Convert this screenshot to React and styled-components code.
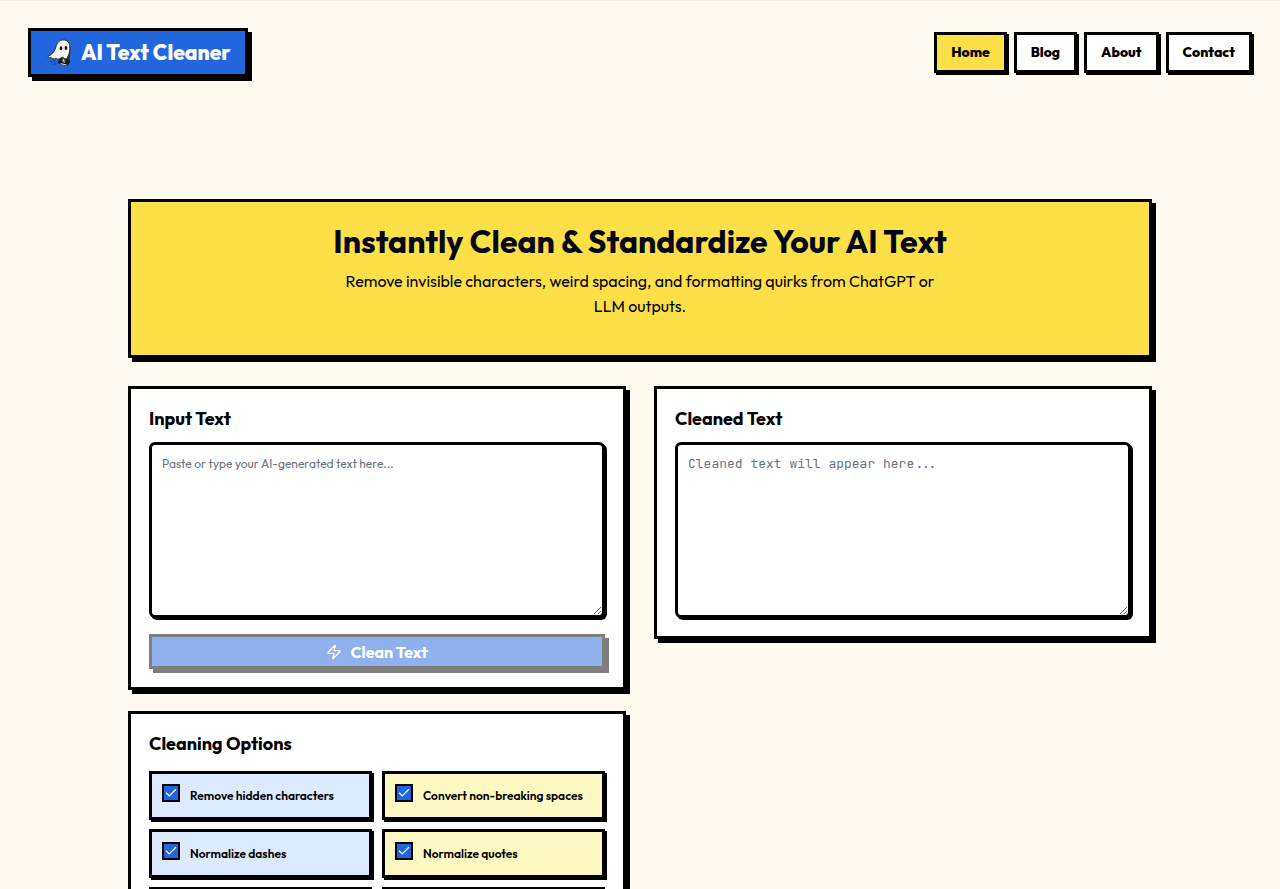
import React from 'react';
import styled, { createGlobalStyle } from 'styled-components';
import { Check, Zap } from 'lucide-react';

const GlobalStyle = createGlobalStyle`
  *, *::before, *::after { box-sizing: border-box; }
  body {
    margin: 0;
    background: #fffaf0;
    color: #000;
    font-family: Outfit, Lato, "Liberation Sans", sans-serif;
    overflow-x: hidden;
  }
  h1, h2, p { margin: 0; }
`;

const Page = styled.div`
  border-top: 1px solid #f1ece4;
`;

const Header = styled.header`
  display: flex;
  align-items: center;
  justify-content: space-between;
  flex-wrap: wrap;
  gap: 16px;
  padding: 27px 28px 28px;
`;

const Brand = styled.a`
  display: flex;
  align-items: center;
  gap: 8px;
  padding: 7px 14px;
  border: 3px solid #000;
  background: #2166dd;
  box-shadow: 4px 4px 0 #000;
  color: #fff;
  font-size: 21px;
  font-weight: 800;
  line-height: 29px;
  text-decoration: none;
`;

const Nav = styled.nav`
  display: flex;
  flex-wrap: wrap;
  gap: 7px;
`;

const NavLink = styled.a`
  padding: 7px 14px;
  border: 3px solid #000;
  background: ${(p) => (p.$active ? '#fde047' : '#fff')};
  box-shadow: 2px 2px 0 #000;
  color: #000;
  font-size: 14px;
  font-weight: 800;
  line-height: 21px;
  text-decoration: none;
`;

const Main = styled.main`
  max-width: 1080px;
  margin: 0 auto;
  padding: 94px 28px 28px;
`;

const Hero = styled.section`
  margin-bottom: 28px;
  padding: 18px 18px 36px;
  border: 3px solid #000;
  background: #fde047;
  box-shadow: 4px 4px 0 #000;
  text-align: center;
`;

const Title = styled.h1`
  margin-bottom: 7px;
  color: #020617;
  font-size: 32px;
  font-weight: 700;
  line-height: 42px;
`;

const Lead = styled.p`
  max-width: 600px;
  margin: 0 auto;
  font-size: 16px;
  line-height: 25px;
`;

const Columns = styled.div`
  display: grid;
  grid-template-columns: repeat(auto-fit, minmax(min(100%, 400px), 1fr));
  align-items: start;
  gap: 28px;
`;

const Stack = styled.div`
  display: grid;
  gap: 21px;
`;

const Card = styled.section`
  padding: 18px;
  border: 3px solid #000;
  background: #fff;
  box-shadow: 4px 4px 0 #000;
`;

const CardTitle = styled.h2`
  margin-bottom: ${(p) => (p.$roomy ? '15px' : '11px')};
  font-size: 18px;
  font-weight: 700;
  line-height: 24px;

  label { display: block; }
`;

const TextBox = styled.textarea`
  display: block;
  width: 100%;
  height: 176px;
  padding: 10px;
  border: 3px solid #000;
  border-radius: 6px;
  background: #fff;
  box-shadow: 2px 2px 0 #000;
  color: #000;
  font-family: ${(p) => (p.$mono ? '"JetBrains Mono", "DejaVu Sans Mono", monospace' : 'inherit')};
  font-size: ${(p) => (p.$mono ? '13px' : '12px')};
  line-height: 18px;
  resize: vertical;

  &::placeholder { color: #6b7280; opacity: 1; }
`;

const CleanButton = styled.button`
  display: flex;
  align-items: center;
  justify-content: center;
  gap: 8px;
  width: 100%;
  height: 35px;
  margin-top: 16px;
  padding: 0 14px;
  border: 3px solid #000;
  background: #2166dd;
  box-shadow: 4px 4px 0 #000;
  color: #fff;
  font-family: inherit;
  font-size: 16px;
  font-weight: 700;

  &:disabled { opacity: 0.5; }
`;

const Options = styled.div`
  display: grid;
  grid-template-columns: 1fr 1fr;
  gap: 9px 10px;
`;

const Option = styled.label`
  display: flex;
  gap: 10px;
  padding: 10px 10px 9px;
  border: 3px solid #000;
  background: ${(p) => (p.$tone === 'blue' ? '#dbeafe' : '#fef9c3')};
  box-shadow: 2px 2px 0 #000;
  font-size: 12px;
  font-weight: 600;
  line-height: 24px;
`;

const Tick = styled.span`
  display: grid;
  flex: none;
  width: 18px;
  height: 18px;

  input, svg { grid-area: 1 / 1; place-self: center; }
  svg { color: #fff; pointer-events: none; visibility: hidden; }
  input:checked + svg { visibility: visible; }
`;

const CheckBox = styled.input`
  appearance: none;
  width: 18px;
  height: 18px;
  margin: 0;
  border: 2px solid #000;
  background: #fff;

  &:checked { background: #2166dd; }
`;

const GhostLogo = () => (
  <svg width="28" height="28" viewBox="15 24 84 84" aria-hidden="true">
    <path d="M58 80 L84 68 L91 94 L80 106 L53 97 Z" fill="#191919" />
    <path
      d="M49 44 C53 31 63 25 73 27 C86 29 91 40 90 52 C89 66 85 79 78 84 C72 84 70 78 66 78 C61 83 53 87 48 82 C42 85 34 84 33 79 C28 82 23 80 24 76 C38 71 45 59 49 44 Z"
      fill="#f5f5f0"
      stroke="#33332f"
      strokeWidth="3"
    />
    <path d="M88 43 C91 60 86 76 78 84 L88 88 C92 72 94 52 88 43 Z" fill="#33332f" />
    <ellipse cx="63" cy="52" rx="4" ry="6" fill="#111" />
    <ellipse cx="78" cy="51" rx="4" ry="6" fill="#111" />
    <path d="M64 87 L76 83 L78 91 L67 95 Z" fill="#4b4b48" />
    <path d="M69 83 L73 95 M62 98 L80 102" stroke="#e4e4df" strokeWidth="3" fill="none" />
    <path d="M29 89h7v6h-7z M39 86h6v6h-6z M42 95h6v6h-6z M33 98h5v4h-5z" fill="#1d4fa8" />
  </svg>
);

const links = ['Home', 'Blog', 'About', 'Contact'];

const options = [
  ['Remove hidden characters', 'blue'],
  ['Convert non-breaking spaces', 'yellow'],
  ['Normalize dashes', 'blue'],
  ['Normalize quotes', 'yellow'],
  ['Convert ellipses', 'blue'],
  ['Trim trailing spaces', 'yellow'],
];

export default function App() {
  return (
    <Page>
      <GlobalStyle />
      <Header>
        <Brand href="#home">
          <GhostLogo />
          AI Text Cleaner
        </Brand>
        <Nav>
          {links.map((name, i) => (
            <NavLink key={name} href={`#${name.toLowerCase()}`} $active={i === 0}>
              {name}
            </NavLink>
          ))}
        </Nav>
      </Header>
      <Main>
        <Hero>
          <Title>Instantly Clean &amp; Standardize Your AI Text</Title>
          <Lead>
            Remove invisible characters, weird spacing, and formatting quirks from ChatGPT or LLM outputs.
          </Lead>
        </Hero>
        <Columns>
          <Stack>
            <Card>
              <CardTitle>
                <label htmlFor="input-text">Input Text</label>
              </CardTitle>
              <TextBox id="input-text" placeholder="Paste or type your AI-generated text here..." />
              <CleanButton type="button" disabled>
                <Zap size={16} />
                Clean Text
              </CleanButton>
            </Card>
            <Card>
              <CardTitle $roomy>Cleaning Options</CardTitle>
              <Options>
                {options.map(([name, tone]) => (
                  <Option key={name} $tone={tone}>
                    <Tick>
                      <CheckBox type="checkbox" defaultChecked />
                      <Check size={14} strokeWidth={2} />
                    </Tick>
                    {name}
                  </Option>
                ))}
              </Options>
            </Card>
          </Stack>
          <Card>
            <CardTitle>
              <label htmlFor="cleaned-text">Cleaned Text</label>
            </CardTitle>
            <TextBox id="cleaned-text" $mono readOnly placeholder="Cleaned text will appear here..." />
          </Card>
        </Columns>
      </Main>
    </Page>
  );
}
